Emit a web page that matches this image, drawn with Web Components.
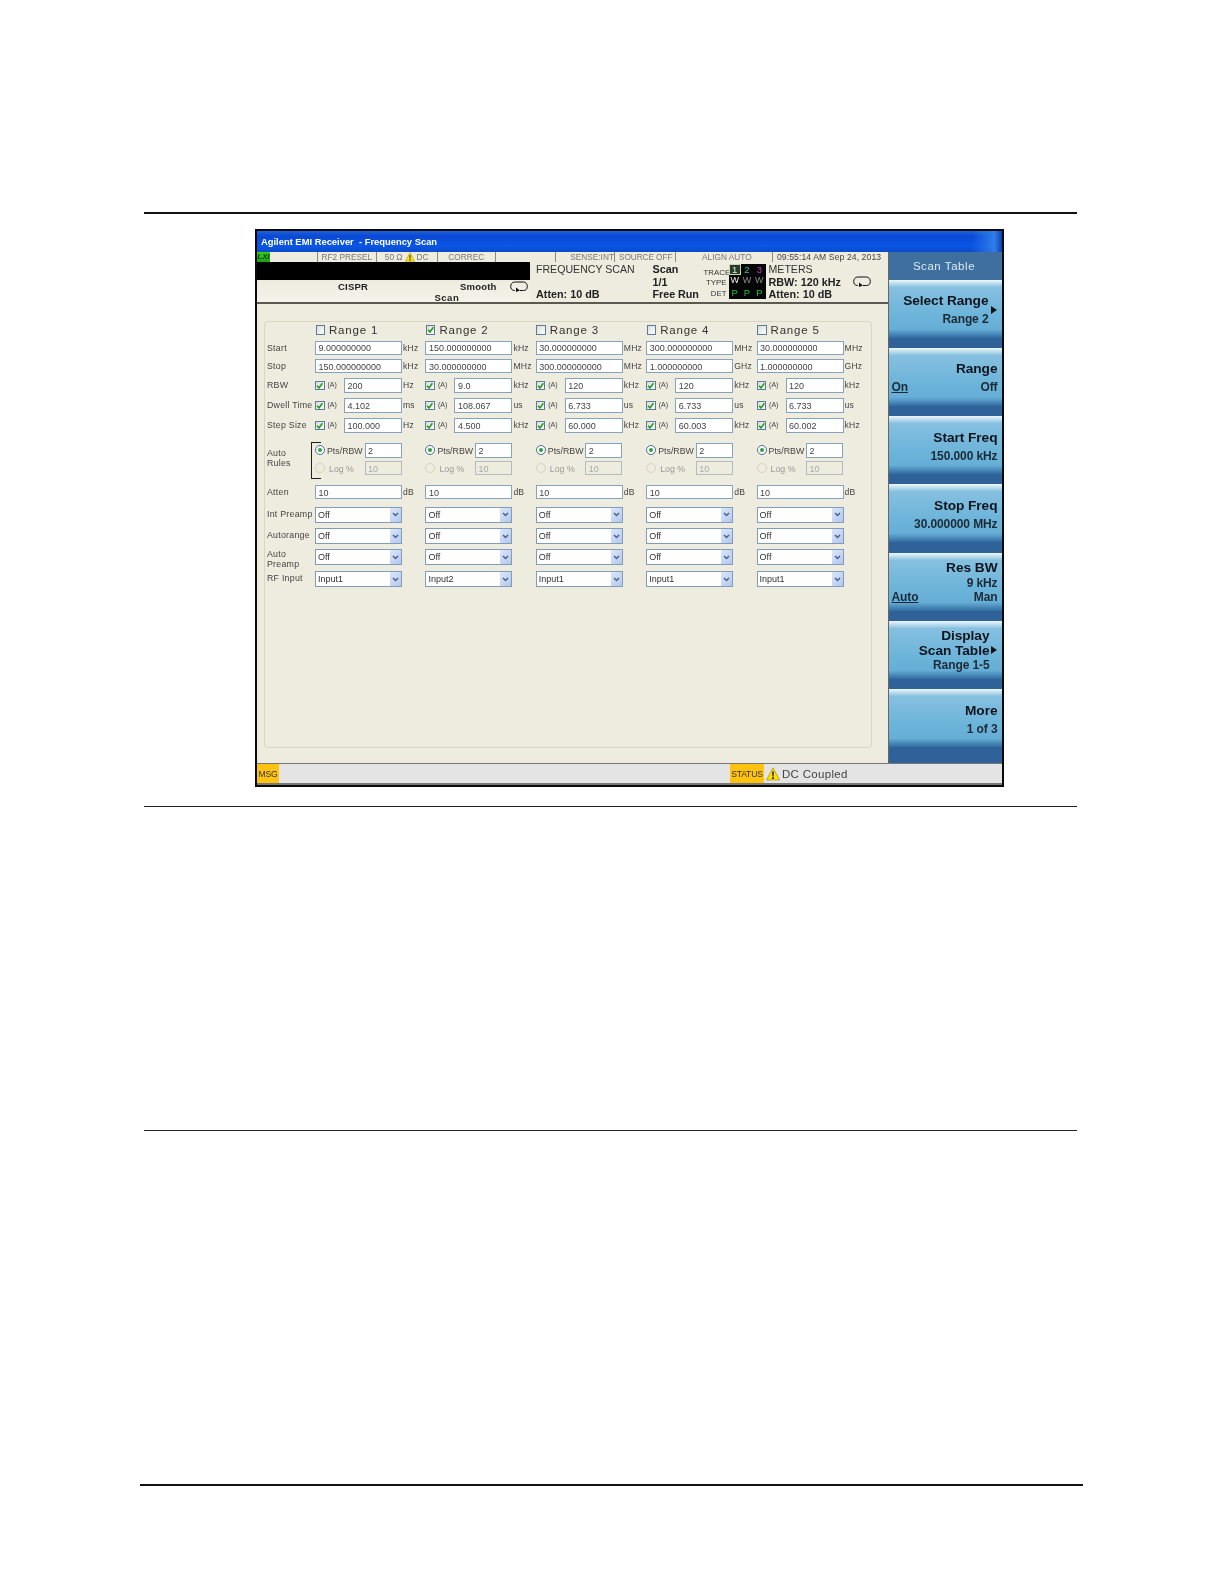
<!DOCTYPE html>
<html><head><meta charset="utf-8"><title>Frequency Scan</title>
<style>
html,body{margin:0;background:#fff;font-family:"Liberation Sans",Arial,sans-serif}
</style></head><body>
<x-doc-page>
<x-instrument>
<x-titlebar>Agilent EMI Receiver&nbsp; - Frequency Scan</x-titlebar>
<x-status-row slot="status"></x-status-row>
<x-meas-bar slot="meas"></x-meas-bar>
<x-scan-table slot="main"></x-scan-table>
<x-softpanel slot="keys" heading="Scan Table">
<x-softkey arrow="1" inset="13"><x-key-line big>Select Range</x-key-line><x-key-line>Range 2</x-key-line></x-softkey>
<x-softkey><x-key-line big>Range</x-key-line><x-key-line split><u slot="left"><b>On</b></u>Off</x-key-line></x-softkey>
<x-softkey><x-key-line big>Start Freq</x-key-line><x-key-line>150.000 kHz</x-key-line></x-softkey>
<x-softkey><x-key-line big>Stop Freq</x-key-line><x-key-line>30.000000 MHz</x-key-line></x-softkey>
<x-softkey dense><x-key-line big>Res BW</x-key-line><x-key-line>9 kHz</x-key-line><x-key-line split><u slot="left">Auto</u>Man</x-key-line></x-softkey>
<x-softkey dense arrow="2" inset="12"><x-key-line big>Display</x-key-line><x-key-line big>Scan Table</x-key-line><x-key-line>Range 1-5</x-key-line></x-softkey>
<x-softkey><x-key-line big>More</x-key-line><x-key-line>1 of 3</x-key-line></x-softkey>
</x-softpanel>
<x-msgbar slot="msg"></x-msgbar>
</x-instrument>
</x-doc-page>
<script>
const loopIcon=`<svg width="18" height="11" viewBox="0 0 18 11" style="display:block"><path d="M5 9.500H4.500C2 9.500.7 7.600.7 5.500S2 1 4.500 1h9C16 1 17.300 3 17.300 5.500S16 9.500 13.500 9.500H10" fill="none" stroke="#111" stroke-width="1"/><path d="M6 6.500l4 3-4 1.500z" fill="#111"/></svg>`;
const warnIcon=(s)=>`<svg width="${s}" height="${s}" viewBox="0 0 14 14" style="display:block"><path d="M7 .8L13.500 13H.5z" fill="#ffe000" stroke="#a08000" stroke-width=".6"/><path d="M6.200 4.500h1.600l-.3 5h-1z M6.200 10.300h1.600v1.600H6.200z" fill="#111"/></svg>`;
const PANEL='#eeebdf';

customElements.define('x-doc-page',class extends HTMLElement{constructor(){super();this.attachShadow({mode:'open'}).innerHTML=`<style>
:host{display:block;width:1224px;height:1584px;box-sizing:border-box;padding:212px 0 0 144px;background:#fff}
.r{height:2px;width:933px;background:#111}
.f{margin:15px 0 0 111px;width:749px}
.thin{height:1px;background:#222}
.a{margin-top:19px}.b{margin-top:323px}
.c{height:2px;width:943px;margin:353px 0 0 -4px;background:#111}
</style><div class="r"></div><div class="f"><slot></slot></div><div class="r thin a"></div><div class="r thin b"></div><div class="c"></div>`}});

customElements.define('x-instrument',class extends HTMLElement{constructor(){super();this.attachShadow({mode:'open'}).innerHTML=`<style>
:host{display:block;width:749px;height:558px;box-sizing:border-box;border:2.500px solid #0a0a0a;background:${PANEL};filter:blur(.3px);font-family:"Liberation Sans",Arial,sans-serif;color:#222}
.body{display:grid;grid-template-columns:630.500px 1fr;height:511px}
.left{display:flex;flex-direction:column;min-width:0}
</style><slot></slot><div class="body"><div class="left"><slot name="status"></slot><slot name="meas"></slot><slot name="main"></slot></div><slot name="keys"></slot></div><slot name="msg"></slot>`}});

customElements.define('x-titlebar',class extends HTMLElement{constructor(){super();this.attachShadow({mode:'open'}).innerHTML=`<style>
:host{display:flex;align-items:center;height:21px;box-sizing:border-box;padding:0 0 0 4px;color:#fff;font-size:9.400px;font-weight:bold;letter-spacing:0;white-space:pre;
background:linear-gradient(90deg,transparent 96%,#2f7de8 99%,#0c43b0),linear-gradient(180deg,#1e62dc 0,#0a48d4 25%,#0a56e6 70%,#0b4bc8 100%)}
</style><slot></slot>`}});

customElements.define('x-status-row',class extends HTMLElement{constructor(){super();const c=[['',13,'lxi'],['',48],['RF2 PRESEL',58.700],['50 Ω <i></i> DC',61,'w'],['CORREC',58.300],['',60],['SENSE:INT',59,'e'],['SOURCE OFF',60.700,'s'],['ALIGN AUTO',97.300,'m'],['09:55:14 AM Sep 24, 2013',114,'t']];
this.attachShadow({mode:'open'}).innerHTML=`<style>
:host{display:grid;grid-template-columns:${c.map(x=>x[1]+'px').join(' ')};height:10px;background:${PANEL};font-size:8.300px;color:#777;line-height:10px;white-space:nowrap;overflow:hidden}
div{box-sizing:border-box;border-right:1px solid #8a8a80;text-align:center;min-width:0;overflow:hidden}
.lxi{background:linear-gradient(#3ccc1c,#1ea010);color:#042;font:bold italic 8px/10px "Liberation Sans",sans-serif;border:0}
.e{text-align:right}
.s{text-align:left;padding-left:4px;letter-spacing:-.1px}
.m{padding-left:6px}
.t{text-align:left;padding-left:4px;border:0;color:#444;font-size:8.600px;letter-spacing:.1px}
.w{display:flex;align-items:center;justify-content:center;gap:2px}
.w span{display:block}
</style>${c.map((x,i)=>{const k=x[2]||'';if(k==='lxi')return `<div class="lxi">LXI</div>`;if(i===1)return `<div></div>`;if(k==='w')return `<div class="w"><span>50 Ω</span>${warnIcon(10)}<span>DC</span></div>`;return `<div class="${k}">${x[0]}</div>`}).join('')}`}});

customElements.define('x-trace-box',class extends HTMLElement{constructor(){super();this.attachShadow({mode:'open'}).innerHTML=`<style>
:host{display:grid;grid-template-columns:repeat(3,1fr);grid-template-rows:repeat(3,1fr);width:37px;height:35px;background:#050505;font-size:9.500px;line-height:11.500px;text-align:center}
.a{color:#e8f0c0;background:#263c30;outline:1px solid #c8d8a0;outline-offset:-1px}.b{color:#30c0b0}.c{color:#c040d0}
.w{color:#f4f4f4;font-size:9px}.g{color:#8a8a8a;font-size:9px}.p{color:#18c040}
</style><span class="a">1</span><span class="b">2</span><span class="c">3</span><span class="w">W</span><span class="g">W</span><span class="g">W</span><span class="p">P</span><span class="p">P</span><span class="p">P</span>`}});

customElements.define('x-meas-bar',class extends HTMLElement{constructor(){super();this.attachShadow({mode:'open'}).innerHTML=`<style>
:host{display:grid;grid-template-columns:272.500px 6.500px 116.500px 51px 25px 40px 119px;height:42px;box-sizing:border-box;border-bottom:2px solid #5a5850;background:${PANEL};font-size:10.800px;line-height:12.700px;white-space:nowrap}
.l{display:grid;grid-template-rows:17.500px 1fr;min-width:0}
.blk{background:#000}
.cis{display:grid;grid-template-columns:81px 96.500px 25.500px 49.500px 18px 2.500px;grid-template-rows:11px 10px;font-weight:bold;font-size:9.500px;line-height:11px;letter-spacing:.2px;padding-top:1px;background:linear-gradient(${PANEL},#f5f3ea)}
.col{display:flex;flex-direction:column;padding-top:1px;min-width:0}
.col span{display:block;height:12.700px}
.st{color:#333;font-size:10.600px}
b{font-weight:bold}
.lab{text-align:right;font-size:7.800px;line-height:10.500px;color:#333;padding:5.500px 2px 0 0;letter-spacing:.05px}
.tb{padding-top:1.500px}
.mt{display:grid;grid-template-columns:84px 35px}
</style>
<div class="l"><div class="blk"></div><div class="cis">
<span style="grid-column:2;grid-row:1">CISPR</span><span style="grid-column:4;grid-row:1">Smooth</span><span style="grid-column:3;grid-row:2;letter-spacing:.5px">Scan</span>
<span style="grid-column:5;grid-row:1">${loopIcon}</span></div></div>
<span></span>
<div class="col"><span class="st">FREQUENCY SCAN</span><span></span><b style="height:12px">Atten: 10 dB</b></div>
<div class="col"><b style="height:12.700px">Scan</b><b style="height:12.700px">1/1</b><b style="letter-spacing:-.05px">Free Run</b></div>
<div class="lab">TRACE<br>TYPE<br>DET</div>
<div class="tb"><x-trace-box></x-trace-box></div>
<div class="mt"><div class="col"><span class="st">METERS</span><b style="height:12.700px">RBW: 120 kHz</b><b>Atten: 10 dB</b></div><div style="padding-top:14px">${loopIcon}</div></div>`}});

customElements.define('x-check',class extends HTMLElement{constructor(){super();const on=this.hasAttribute('on');this.attachShadow({mode:'open'}).innerHTML=`<style>
:host{display:block;width:9.500px;height:9.500px;box-sizing:border-box;border:1px solid #5a7a9f;background:linear-gradient(135deg,#dcdcd4,#fff);flex:none}
svg{display:block}
</style>${on?`<svg width="7.500" height="7.500" viewBox="0 0 7 7"><path d="M1 3.500l1.800 2L6 1.200" fill="none" stroke="#1f9a1f" stroke-width="1.500"/></svg>`:''}`}});

customElements.define('x-radio',class extends HTMLElement{constructor(){super();const on=this.hasAttribute('on');this.attachShadow({mode:'open'}).innerHTML=`<style>
:host{display:block;width:10px;height:10px;box-sizing:border-box;border:1px solid ${on?'#49718f':'#d5d2c0'};border-radius:50%;background:${on?'#fff':PANEL};flex:none}
i{display:block;width:4px;height:4px;border-radius:50%;background:#2fa04a;margin:2px}
</style>${on?'<i></i>':''}`}});

customElements.define('x-field',class extends HTMLElement{constructor(){super();this.attachShadow({mode:'open'}).innerHTML=`<style>
:host{display:flex;align-items:center;box-sizing:border-box;height:14.500px;border:1px solid #86a2bc;background:#fff;color:#444;font-size:9px;padding:1px 0 0 2.500px;white-space:nowrap;overflow:hidden;flex:none}
:host([disabled]){background:${PANEL};color:#aaa;border-color:#b5bcc0}
:host([wide]){width:87px}
</style><slot></slot>`}});

customElements.define('x-combo',class extends HTMLElement{constructor(){super();this.attachShadow({mode:'open'}).innerHTML=`<style>
:host{display:flex;align-items:center;box-sizing:border-box;width:87px;height:16px;border:1px solid #7f9db9;background:#fff;color:#333;font-size:9px;padding-left:2px;white-space:nowrap}
span{flex:1}
.btn{width:11px;height:14px;flex:none;background:linear-gradient(135deg,#dbe6fb,#b3c8f0);display:flex;align-items:center;justify-content:center}
svg{display:block}
</style><span><slot></slot></span><div class="btn"><svg width="7" height="5" viewBox="0 0 7 5"><path d="M1 1l2.500 2.500L6 1" fill="none" stroke="#4d6185" stroke-width="1.500"/></svg></div>`}});

customElements.define('x-scan-table',class extends HTMLElement{constructor(){super();
const ranges=[
{on:0,n:'Range 1',start:'9.000000000',su:'kHz',stop:'150.000000000',pu:'kHz',rbw:'200',ru:'Hz',dw:'4.102',du:'ms',step:'100.000',tu:'Hz',input:'Input1'},
{on:1,n:'Range 2',start:'150.000000000',su:'kHz',stop:'30.000000000',pu:'MHz',rbw:'9.0',ru:'kHz',dw:'108.067',du:'us',step:'4.500',tu:'kHz',input:'Input2'},
{on:0,n:'Range 3',start:'30.000000000',su:'MHz',stop:'300.000000000',pu:'MHz',rbw:'120',ru:'kHz',dw:'6.733',du:'us',step:'60.000',tu:'kHz',input:'Input1'},
{on:0,n:'Range 4',start:'300.000000000',su:'MHz',stop:'1.000000000',pu:'GHz',rbw:'120',ru:'kHz',dw:'6.733',du:'us',step:'60.003',tu:'kHz',input:'Input1'},
{on:0,n:'Range 5',start:'30.000000000',su:'MHz',stop:'1.000000000',pu:'GHz',rbw:'120',ru:'kHz',dw:'6.733',du:'us',step:'60.002',tu:'kHz',input:'Input1'}];
const row=(label,fn,cls='')=>`<div class="lb ${cls}">${label}</div>`+ranges.map(fn).join('');
const fld=(v,u)=>`<div class="c"><x-field wide>${v}</x-field><span class="u">${u}</span></div>`;
const auto=(v,u)=>`<div class="c"><x-check on></x-check><span class="a">(A)</span><x-field style="width:58px">${v}</x-field><span class="u">${u}</span></div>`;
const cmb=(v)=>`<div class="c"><x-combo>${v}</x-combo></div>`;
this.attachShadow({mode:'open'}).innerHTML=`<style>
:host{display:block;flex:1;padding:17px 16px 15px 7px;background:${PANEL}}
.g{height:100%;box-sizing:border-box;border:1px solid #d9d5c3;border-radius:4px;padding:0 0 0 2px;display:grid;
grid-template-columns:48px repeat(5,110.400px);grid-template-rows:18.500px 18.300px 19.400px 20px 20.200px 25px 41.500px 22px 21.500px 21.100px 21.600px 1fr;font-size:8.800px;color:#444}
.lb{line-height:11px;letter-spacing:.25px;white-space:nowrap;padding-top:2px}
.lb.two{line-height:10px;padding-top:0}
.c{display:flex;align-items:flex-start;white-space:nowrap;min-width:0}
.h{display:flex;align-items:center;gap:4px;font-size:11.500px;letter-spacing:.8px;color:#333;height:16px;padding-left:.5px}
.u{font-size:8.600px;margin-left:1px;padding-top:2px;letter-spacing:.2px}
.a{font-size:7px;width:19.500px;padding:3px 0 0 3px;box-sizing:border-box;flex:none}
.c x-check{margin-top:2.500px}
.rules{display:grid;grid-template-columns:12px 37.500px 37px;grid-template-rows:18px 14px;align-items:start;font-size:8.800px}
.rules x-radio{margin-top:2px}
.rules span{padding-top:2.500px}
.off{color:#999}
.br{position:relative}
.br::after{content:"";position:absolute;left:44px;top:-1px;width:9px;height:35px;border-left:1px solid #222;border-top:1px solid #222;border-bottom:1px solid #222}
</style><div class="g">
<div></div>${ranges.map(r=>`<div class="h"><x-check ${r.on?'on':''}></x-check>${r.n}</div>`).join('')}
${row('Start',r=>fld(r.start,r.su))}
${row('Stop',r=>fld(r.stop,r.pu))}
${row('RBW',r=>auto(r.rbw,r.ru))}
${row('Dwell Time',r=>auto(r.dw,r.du))}
${row('Step Size',r=>auto(r.step,r.tu))}
<div class="lb two br" style="padding-top:5px">Auto<br>Rules</div>${ranges.map(()=>`<div class="rules"><x-radio on></x-radio><span>Pts/RBW</span><x-field style="width:37px">2</x-field><x-radio></x-radio><span class="off" style="padding-left:2px">Log %</span><x-field disabled style="width:37px;height:13.500px">10</x-field></div>`).join('')}
${row('Atten',()=>fld('10','dB'))}
${row('Int Preamp',()=>cmb('Off'))}
${row('Autorange',()=>cmb('Off'))}
<div class="lb two">Auto<br>Preamp</div>${ranges.map(()=>cmb('Off')).join('')}
${row('RF Input',r=>cmb(r.input))}
</div>`}});

customElements.define('x-softpanel',class extends HTMLElement{constructor(){super();this.attachShadow({mode:'open'}).innerHTML=`<style>
:host{display:flex;flex-direction:column;background:#2f6298;border-left:1px solid #666;box-sizing:border-box;width:114px;height:511px;gap:10.300px}
.h{height:27.500px;margin-bottom:-10.300px;background:#3f6f9f;color:#d9ecf4;font-size:11.500px;letter-spacing:.55px;display:flex;align-items:center;justify-content:center;padding-right:2px}
</style><div class="h">${this.getAttribute('heading')||''}</div><slot></slot>`}});

customElements.define('x-softkey',class extends HTMLElement{constructor(){super();const arrow=this.getAttribute('arrow');this.attachShadow({mode:'open'}).innerHTML=`<style>
:host{display:flex;flex-direction:column;position:relative;box-sizing:border-box;height:58px;padding:11.500px ${(this.getAttribute('inset')||4)}px 0 3px;color:#111;
background:linear-gradient(180deg,#f0f8fb 0,#c4e2f0 5%,#86c0e0 13%,#6db4da 60%,#66aed6 85%,#4d8fbd 92%,#2f6ca3 100%)}
:host([dense]){padding-top:8.500px}
.ar{position:absolute;right:4.500px;width:0;height:0;border-left:6px solid #111;border-top:4px solid transparent;border-bottom:4px solid transparent}
</style><slot></slot>${arrow==='1'?'<i class="ar" style="top:26px"></i>':arrow==='2'?'<i class="ar" style="top:25px"></i>':''}`}});

customElements.define('x-key-line',class extends HTMLElement{constructor(){super();this.attachShadow({mode:'open'}).innerHTML=`<style>
:host{display:flex;justify-content:flex-end;font-size:12px;line-height:19px;height:19px;font-weight:bold;white-space:nowrap;color:#1c2a36;letter-spacing:-.1px}
:host([big]){font-size:13.700px;letter-spacing:-.05px;color:#0c141c}
:host-context([dense]){line-height:14.500px;height:14.500px}
:host([split]){justify-content:space-between}
</style><slot name="left"></slot><slot></slot>`}});

customElements.define('x-msgbar',class extends HTMLElement{constructor(){super();this.attachShadow({mode:'open'}).innerHTML=`<style>
:host{display:grid;grid-template-columns:22px 451px 34px 18px 1fr;height:22px;box-sizing:border-box;background:#e4e4e4;border-top:1.500px solid #777;border-bottom:2px solid #777;align-items:stretch;font-size:11.500px;color:#444}
.y{background:#ffc20e;display:flex;align-items:center;justify-content:center;font-size:8.600px;color:#333;letter-spacing:-.15px}
.i{display:flex;align-items:center;justify-content:center}
.t{display:flex;align-items:center;letter-spacing:.3px}
</style><div class="y">MSG</div><div></div><div class="y">STATUS</div><div class="i">${warnIcon(14)}</div><div class="t">DC Coupled</div>`}});
</script>
</body></html>
